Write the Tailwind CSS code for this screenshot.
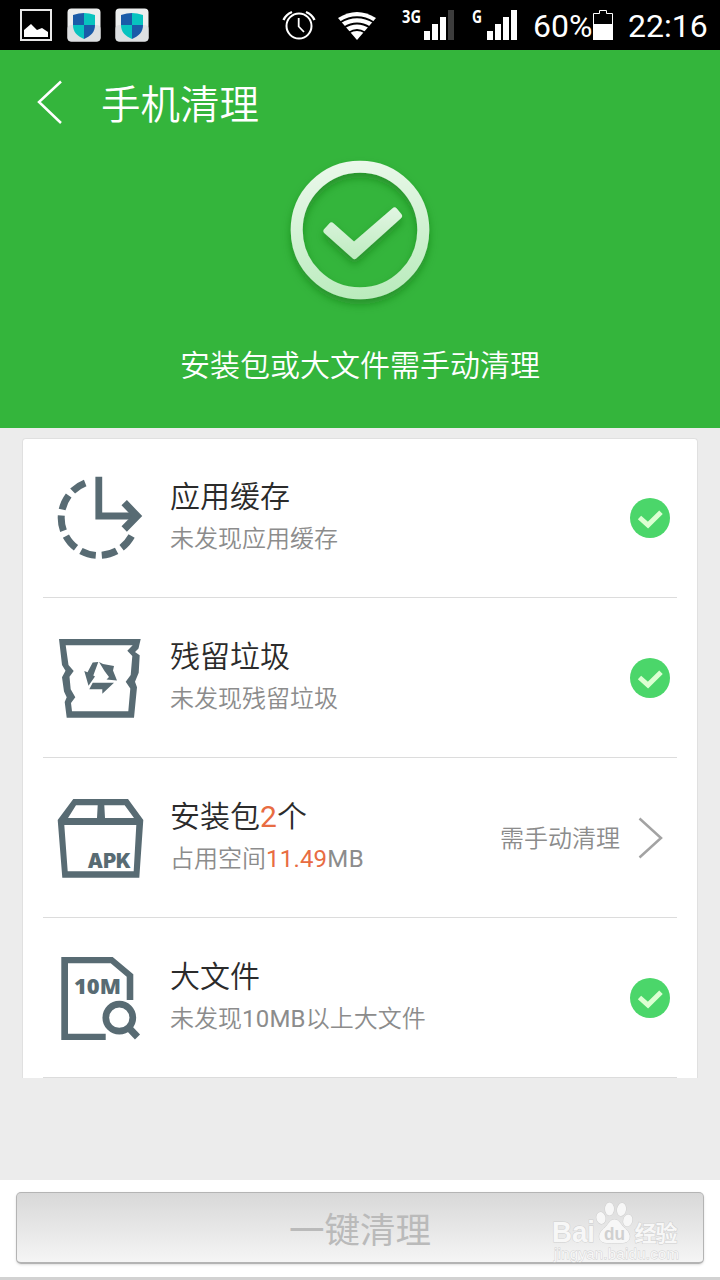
<!DOCTYPE html>
<html lang="zh-CN">
<head>
    <meta charset="UTF-8">
    <meta name="viewport" content="width=device-width, initial-scale=1.0">
    <title>手机清理</title>
    <script src="https://cdn.jsdelivr.net/npm/@tailwindcss/browser@4"></script>
    <style>
        body {
            font-family: Roboto, "Noto Sans CJK SC", sans-serif;
        }
    </style>
</head>
<body class="w-[720px] h-[1280px] flex flex-col overflow-hidden bg-[#ececec] font-[350]">
    <!-- Status bar -->
    <div class="h-[50px] shrink-0 bg-black flex items-center text-white font-normal">
        <svg class="ml-5 w-8 h-8" viewBox="0 0 32 32">
            <rect x="1" y="1" width="30" height="30" fill="none" stroke="#e8e8e8" stroke-width="2"/>
            <path d="M4 28V21L11 15L17 21L22 19L28 23V28Z" fill="#fff"/>
        </svg>
        <svg class="ml-[15px] w-[34px] h-[34px]" viewBox="0 0 34 34">
            <rect x=".5" y=".5" width="33" height="33" rx="4" fill="#eceeee"/>
            <rect x=".5" y="17" width="33" height="16.500" rx="4" fill="#dde0e2"/>
            <path d="M17 5Q22 5 28 7V17H17Z" fill="#08c3bf"/>
            <path d="M17 5Q12 5 6 7V17H17Z" fill="#1a5ba8"/>
            <path d="M6 17C6 24 10 28 17 31V17Z" fill="#08c3bf"/>
            <path d="M28 17C28 24 24 28 17 31V17Z" fill="#1a5ba8"/>
        </svg>
        <svg class="ml-[14px] w-[34px] h-[34px]" viewBox="0 0 34 34">
            <rect x=".5" y=".5" width="33" height="33" rx="4" fill="#eceeee"/>
            <rect x=".5" y="17" width="33" height="16.500" rx="4" fill="#dde0e2"/>
            <path d="M17 5Q22 5 28 7V17H17Z" fill="#08c3bf"/>
            <path d="M17 5Q12 5 6 7V17H17Z" fill="#1a5ba8"/>
            <path d="M6 17C6 24 10 28 17 31V17Z" fill="#08c3bf"/>
            <path d="M28 17C28 24 24 28 17 31V17Z" fill="#1a5ba8"/>
        </svg>
        <!-- Alarm -->
        <svg class="ml-[133px] w-[34px] h-[34px]" viewBox="0 0 34 34" fill="none" stroke="#fff" stroke-width="2">
            <circle cx="17" cy="18" r="12.500"/>
            <path d="M16.700 10V18.500L22 24" stroke-width="1.800"/>
            <path d="M1.500 12Q4 6.500 10 4" stroke-width="2.400"/>
            <path d="M32.500 12Q30 6.500 24 4" stroke-width="2.400"/>
        </svg>
        <!-- Wifi -->
        <svg class="ml-[21px] w-10 h-[34px]" viewBox="0 0 40 34">
            <path d="M1 10Q20 -2 39 10L20 32Z" fill="#fff"/>
            <path d="M3 14.500Q20 4 37 14.500M7 19.500Q20 11.500 33 19.500M12 24.500Q20 19.500 28 24.500" fill="none" stroke="#000" stroke-width="1.800"/>
        </svg>
        <!-- Signal bars -->
        <svg class="ml-[25px] w-[52px] h-[34px] overflow-visible" viewBox="0 0 52 34">
            <text x="0" y="15" font-family="Open Sans" font-weight="700" font-size="17" textLength="19" lengthAdjust="spacingAndGlyphs" fill="#fff">3G</text>
            <path d="M22 23h6v9h-6zM30 16h6v16h-6zM38 9h6v23h-6z" fill="#fff"/>
            <path d="M46 2h6v30h-6z" fill="#3c3c3c"/>
        </svg>
        <svg class="ml-[18px] w-[46px] h-[34px] overflow-visible" viewBox="0 0 46 34">
            <text x="0" y="15" font-family="Open Sans" font-weight="700" font-size="17" textLength="10" lengthAdjust="spacingAndGlyphs" fill="#fff">G</text>
            <path d="M15 23h6v9h-6zM23 16h6v16h-6zM31 9h6v23h-6zM39 2h6v30h-6z" fill="#fff"/>
        </svg>
        <span class="ml-[15px] w-[60px] pt-px text-[32px] leading-[50px] whitespace-nowrap">60%</span>
        <svg class="w-5 h-[34px]" viewBox="0 0 20 34">
            <path d="M.5 5.500H6.500V2.500H13.500V5.500H19.500V31.500H.5Z" fill="none" stroke="#fff"/>
            <path d="M0 16h20v16H0z" fill="#fff"/>
        </svg>
        <span class="ml-[15px] pt-px text-[32px] leading-[50px] whitespace-nowrap">22:16</span>
    </div>

    <!-- Green header -->
    <div class="h-[378px] shrink-0 bg-[#34b53c] text-white flex flex-col">
        <div class="h-[106px] shrink-0 flex items-center">
            <svg class="ml-9 w-7 h-[46px]" viewBox="0 0 28 46" fill="none" stroke="#fff" stroke-width="2.500">
                <path d="M25 1.500L3 22L25 43"/>
            </svg>
            <h1 class="ml-[37px] pt-[5px] text-[39.500px] leading-[60px]">手机清理</h1>
        </div>
        <svg class="self-center w-[180px] h-[170px] shrink-0" viewBox="0 0 180 170">
            <defs>
                <linearGradient id="ring" gradientUnits="userSpaceOnUse" x1="80" y1="4" x2="100" y2="144">
                    <stop offset="0" stop-color="#ebf8eb"/>
                    <stop offset="1" stop-color="#b9ebbc"/>
                </linearGradient>
                <linearGradient id="tick" gradientUnits="userSpaceOnUse" x1="90" y1="50" x2="90" y2="104">
                    <stop offset="0" stop-color="#e3f6e4"/>
                    <stop offset="1" stop-color="#bdebbf"/>
                </linearGradient>
                <filter id="shadow" x="-20%" y="-20%" width="140%" height="150%">
                    <feDropShadow dx="0" dy="5" stdDeviation="4" flood-color="#0c6a14" flood-opacity=".5"/>
                </filter>
            </defs>
            <g filter="url(#shadow)">
                <circle cx="90" cy="74" r="63.300" fill="none" stroke="url(#ring)" stroke-width="12"/>
                <path d="M56.500 75L61.500 69.500L84 89.500L124.500 54.500L129 60L84.500 100Z" fill="url(#tick)" stroke="url(#tick)" stroke-width="6" stroke-linejoin="round"/>
            </g>
        </svg>
        <p class="mt-[12px] text-center text-[30px] leading-[56px]">安装包或大文件需手动清理</p>
    </div>

    <!-- Result list -->
    <div class="h-[752px] shrink-0 pt-[10px] px-[22px]">
        <div class="h-[640px] px-5 bg-white border border-b-0 border-[#e0e0e0] rounded-t-[4px]">
            <div class="h-[159px] pl-[9px] pr-[7px] flex items-center border-b border-[#dcdcdc]">
                <svg class="w-24 h-24" viewBox="0 0 96 96" fill="none" stroke="#586b73" stroke-width="7">
                    <path d="M79.600 66A37.500 37.500 0 1 1 33.200 13" stroke-dasharray="15.500 5.950"/>
                    <path d="M46.800 6.700V46H84" stroke-width="6.800"/>
                    <path d="M72.200 32.700L85 46L72.200 59" stroke-width="7.500"/>
                </svg>
                <div class="ml-[22px] flex-1">
                    <div class="text-[30px] leading-[44px] text-[#2b2b2b]">应用缓存</div>
                    <div class="text-[24px] leading-[40px] pb-[2px] text-[#8c8c8c]">未发现应用缓存</div>
                </div>
                <svg class="w-10 h-10" viewBox="0 0 40 40">
                    <circle cx="20" cy="20" r="20" fill="#4bd66a"/>
                    <path d="M9.500 19.500L18 27L31 14.300" fill="none" stroke="#dcffd2" stroke-width="5"/>
                </svg>
            </div>

            <div class="h-40 pl-[9px] pr-[7px] flex items-center border-b border-[#dcdcdc]">
                <svg class="w-24 h-24" viewBox="0 0 96 96" fill="#586b73">
                    <path fill-rule="evenodd" d="M7 9H88.700L86.500 18.500L83 22L87.700 25.300L86.700 42.700L83 51.700L85 57.300L82 87.700H14.700L12.700 72L14.700 67.300L12 61.500L10 47.300L13.500 40.700L10 35ZM13.700 15.300L16.500 35L21.700 41L17.500 46.700L18.700 59.300L23.300 67.300L19 73L20 81.300H76.300L78.300 58.500L73.700 51.700L78.700 45L80.300 26L75.300 20.700L80.700 15.300Z"/>
                    <path d="M32.300 41L35.500 42.300L40.700 32.500L46.300 32L41.300 45.500L43 46.500L36.500 55.700Z"/>
                    <path d="M47 32L51 34L62 36L61 40.500L65 50.500L54.500 49.500L57 47L52.500 41Z"/>
                    <path d="M40.700 52.700H62L50.300 63.700V59.300H37.300Z"/>
                </svg>
                <div class="ml-[22px] flex-1">
                    <div class="text-[30px] leading-[44px] text-[#2b2b2b]">残留垃圾</div>
                    <div class="text-[24px] leading-[40px] pb-[2px] text-[#8c8c8c]">未发现残留垃圾</div>
                </div>
                <svg class="w-10 h-10" viewBox="0 0 40 40">
                    <circle cx="20" cy="20" r="20" fill="#4bd66a"/>
                    <path d="M9.500 19.500L18 27L31 14.300" fill="none" stroke="#dcffd2" stroke-width="5"/>
                </svg>
            </div>

            <div class="h-40 pl-[9px] pr-[14px] flex items-center border-b border-[#dcdcdc]">
                <svg class="w-24 h-24" viewBox="0 0 96 96" fill="#586b73">
                    <path fill-rule="evenodd" d="M21.300 9H76L91.300 30L87.300 87.700H10.300L5.700 30ZM24 15.300L16 28H45L45.700 15.300ZM52.300 15.300L53 28H82L72.700 15.300ZM12.300 35L15.700 81.300H81.700L84.300 35Z"/>
                    <text x="35.500" y="78.300" font-family="Inter" font-weight="900" font-size="19.500" textLength="43.500" lengthAdjust="spacingAndGlyphs">APK</text>
                </svg>
                <div class="ml-[22px] flex-1">
                    <div class="text-[30px] leading-[44px] text-[#2b2b2b]">安装包<span class="font-normal text-[#e86c42]">2</span>个</div>
                    <div class="text-[24px] leading-[40px] pb-[2px] text-[#8c8c8c]">占用空间<span class="font-normal text-[#e86c42] tracking-[0.2px]">11.49</span><span class="font-normal tracking-[0.4px]">MB</span></div>
                </div>
                <span class="pt-[2px] text-[24px] text-[#8c8c8c]">需手动清理</span>
                <svg class="ml-[18px] w-[25px] h-[42px]" viewBox="0 0 25 42" fill="none" stroke="#a3a3a3" stroke-width="2.500">
                    <path d="M1.500 1.500L23 21L1.500 40.500"/>
                </svg>
            </div>

            <div class="h-40 pl-[9px] pr-[7px] flex items-center border-b border-[#dcdcdc]">
                <svg class="w-24 h-24" viewBox="0 0 96 96" fill="#586b73">
                    <path d="M9.300 7H60.700L81.300 24.300V50H74.700V26.700L58.700 13.300H16V83.700H53.700V90H9.300Z"/>
                    <text x="22" y="44.300" font-family="Open Sans" font-weight="800" font-size="21" textLength="47" lengthAdjust="spacingAndGlyphs">10M</text>
                    <circle cx="67.300" cy="67.700" r="13.500" fill="none" stroke="#586b73" stroke-width="6.700"/>
                    <path d="M76 77L85.500 87" stroke="#586b73" stroke-width="7"/>
                </svg>
                <div class="ml-[22px] flex-1">
                    <div class="text-[30px] leading-[44px] text-[#2b2b2b]">大文件</div>
                    <div class="text-[24px] leading-[40px] pb-[2px] text-[#8c8c8c]">未发现<span class="font-normal tracking-[0.2px]">10MB</span>以上大文件</div>
                </div>
                <svg class="w-10 h-10" viewBox="0 0 40 40">
                    <circle cx="20" cy="20" r="20" fill="#4bd66a"/>
                    <path d="M9.500 19.500L18 27L31 14.300" fill="none" stroke="#dcffd2" stroke-width="5"/>
                </svg>
            </div>
        </div>
    </div>

    <!-- Bottom button -->
    <div class="relative h-[100px] shrink-0 bg-white px-4 pt-3 border-b-[3px] border-[#d2d2d2]">
        <button class="block w-full h-[72px] pt-[5px] rounded-[5px] border border-[#b4b4b4] border-b-2 bg-linear-to-b from-[#d8d8d8] to-[#f5f5f5] text-[35.500px] leading-[66px] font-normal text-[#bababa] shadow-sm">一键清理</button>
        <!-- Watermark -->
        <svg class="absolute left-[550px] top-[20px] w-[136px] h-[64px]" viewBox="0 0 136 64" fill="#f7f7f7" stroke="#cfcfcf" stroke-width="1" paint-order="stroke">
            <text x="2" y="42" font-family="Liberation Sans" font-weight="700" font-size="29" textLength="43" lengthAdjust="spacingAndGlyphs">Bai</text>
            <ellipse cx="51" cy="18" rx="4.500" ry="6" transform="rotate(-12 51 18)"/>
            <ellipse cx="59.500" cy="9" rx="4.500" ry="6.500"/>
            <ellipse cx="71.500" cy="9.500" rx="4.500" ry="6.500" transform="rotate(10 71.500 9.500)"/>
            <ellipse cx="77.800" cy="20.500" rx="4.500" ry="6" transform="rotate(15 77.800 20.500)"/>
            <path d="M64.500 19.500C69 19.500 70.500 24 74 27.500C78 31 80.500 34 79.500 38.500C78 43.500 73 43 64.500 43C56 43 51 43.500 49.500 38.500C48.500 34 51 31 55 27.500C58.500 24 60 19.500 64.500 19.500Z"/>
            <text x="54" y="39.500" font-family="Liberation Sans" font-weight="700" font-size="18" textLength="21" lengthAdjust="spacingAndGlyphs" fill="#d0d0d0" stroke="none">du</text>
            <text x="84.500" y="41" font-family="Noto Sans CJK SC" font-weight="700" font-size="22" textLength="43">经验</text>
            <text x="4" y="59" font-family="Liberation Sans" font-size="15" textLength="125" stroke-width=".8" fill="#f7f7f7">jingyan.baidu.com</text>
        </svg>
    </div>
</body>
</html>
